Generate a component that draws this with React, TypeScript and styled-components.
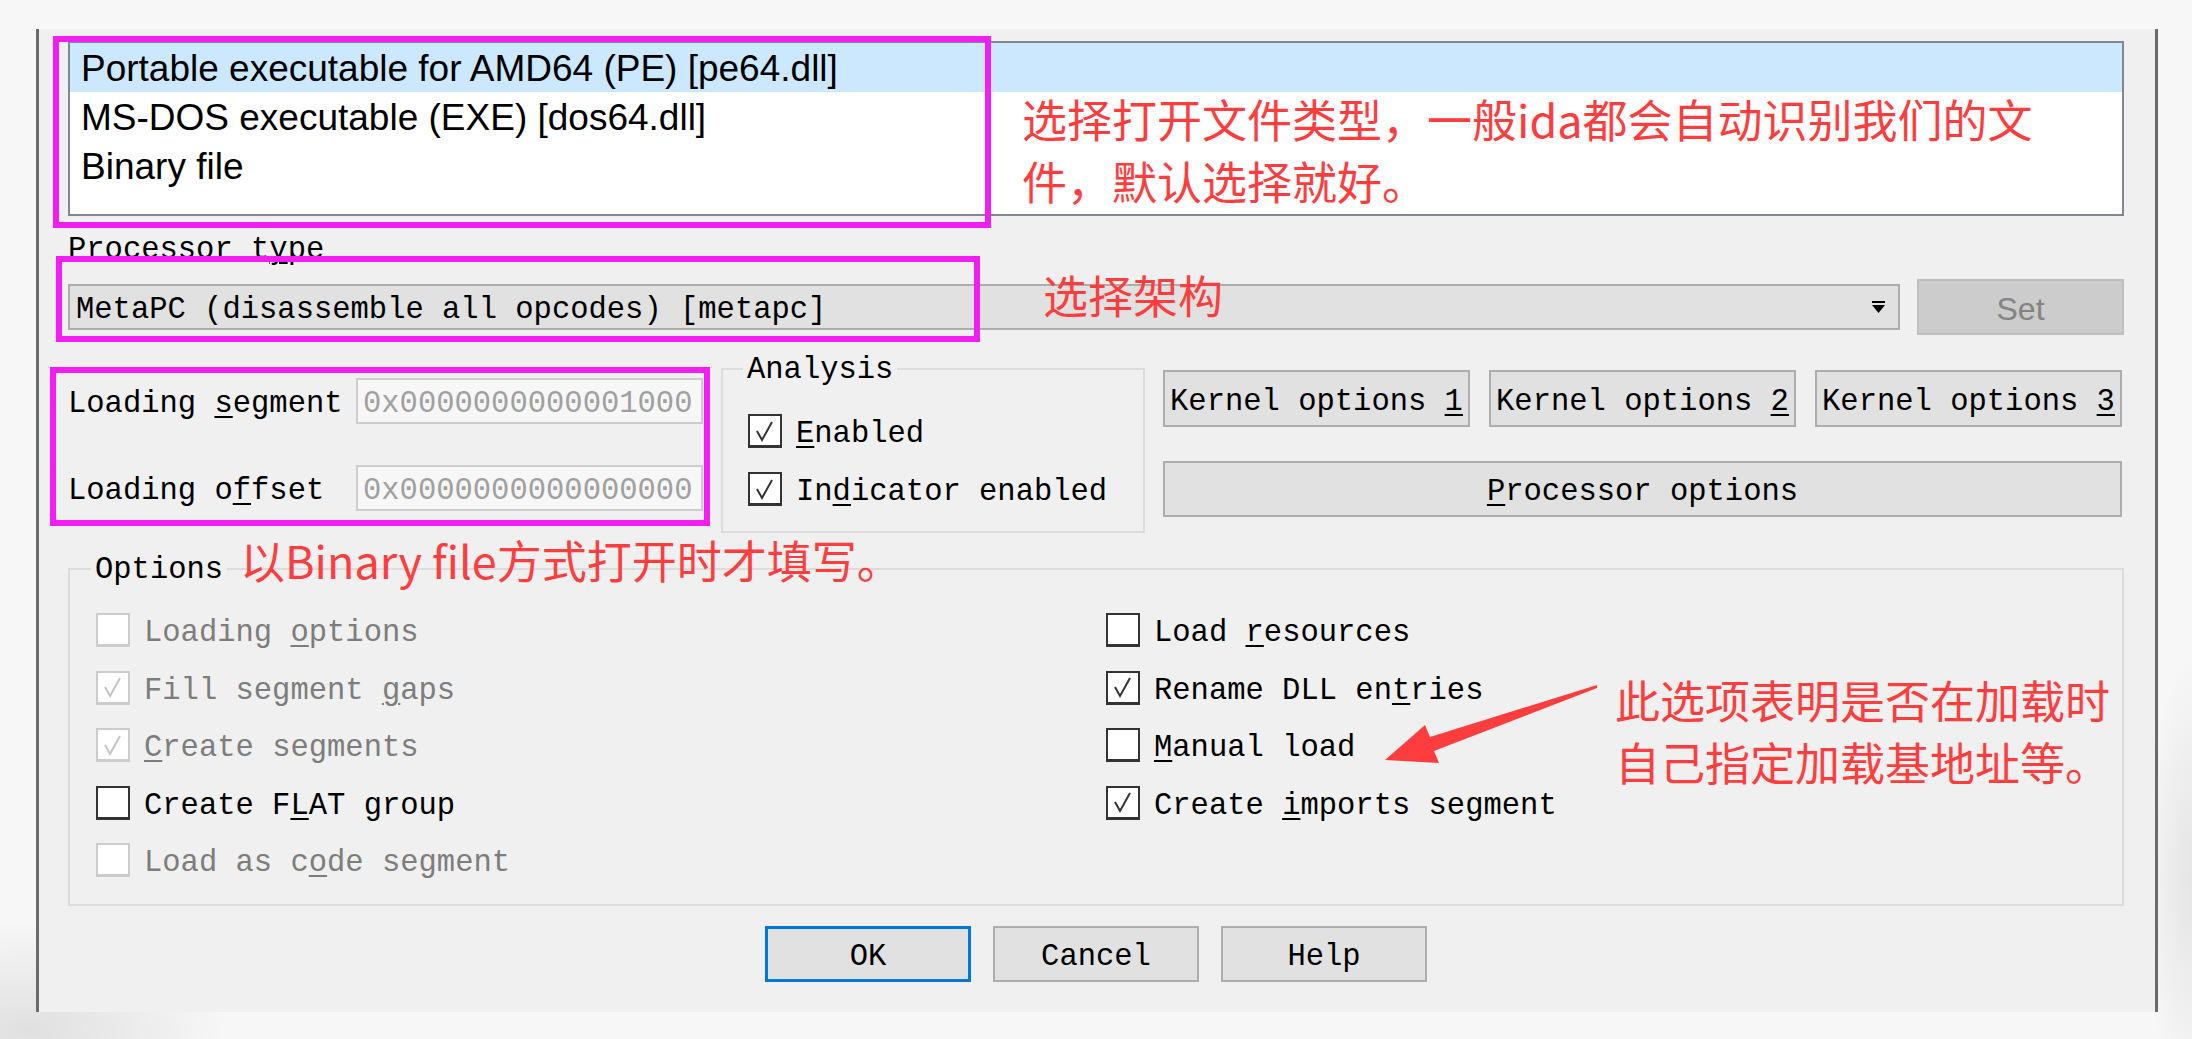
import React from "react";
import styled, { createGlobalStyle } from "styled-components";

const MONO = `"Liberation Mono", "DejaVu Sans Mono", monospace`;
const SANS = `"Liberation Sans", Arial, sans-serif`;
const CJK = `"Noto Sans CJK SC", "Noto Sans", sans-serif`;

const GlobalStyle = createGlobalStyle`
  html, body { margin: 0; padding: 0; }
  body { background: #f7f7f7; overflow: hidden; }
  #root { width: 2192px; height: 1039px; }
`;

const Page = styled.div`
  position: relative;
  width: 2192px;
  height: 1039px;
  box-sizing: border-box;
  padding: 29px 0 0 36px;
  overflow: hidden;
  background:
    radial-gradient(ellipse 200px 110px at 30px 1030px, rgba(205, 205, 205, 0.55), transparent),
    radial-gradient(ellipse 50px 220px at 2192px 880px, rgba(205, 205, 205, 0.45), transparent),
    #f7f7f7;
`;

const Dialog = styled.div`
  width: 2122px;
  height: 983px;
  box-sizing: border-box;
  background: #f0f0f0;
  border-left: 3px solid #6b6b6b;
  border-right: 3px solid #6b6b6b;
  padding: 12px 31px 30px 29px;
  display: flex;
  flex-direction: column;
  font-family: ${MONO};
  font-size: 30.5px;
  color: #000;
  white-space: nowrap;
`;

/* text inside flex-centred controls sits a little lower in the original font */
const Text = styled.span`
  padding-top: 6px;
`;

const ListBox = styled.div`
  height: 175px;
  box-sizing: border-box;
  border: 2px solid #828790;
  background: #fff;
  font-family: ${SANS};
  font-size: 37px;
`;

const ListRow = styled.div<{ $selected?: boolean }>`
  height: 49px;
  display: flex;
  align-items: center;
  padding: 3px 0 0 11px;
  box-sizing: border-box;
  background: ${(p) => (p.$selected ? "#cce8ff" : "transparent")};
`;

const SectionLabel = styled.div`
  margin-top: 16px;
  height: 32px;
  line-height: 36px;
`;

const Key = styled.span`
  text-decoration: underline;
  text-decoration-thickness: 2px;
  text-underline-offset: 4px;
`;

const ComboRow = styled.div`
  margin-top: 15px;
  height: 56px;
  display: flex;
  align-items: center;
  gap: 17px;
`;

const Combo = styled.div`
  flex: 1;
  height: 46px;
  box-sizing: border-box;
  border: 2px solid #adadad;
  background: #e1e1e1;
  display: flex;
  align-items: center;
  justify-content: space-between;
  padding: 0 13px 0 6px;
`;

const SetButton = styled.div`
  width: 207px;
  height: 56px;
  box-sizing: border-box;
  border: 2px solid #bfbfbf;
  background: #cccccc;
  color: #838383;
  font-family: ${SANS};
  font-size: 32px;
  display: flex;
  align-items: center;
  justify-content: center;
  padding-top: 5px;
`;

const MiddleRow = styled.div`
  margin-top: 18px;
  height: 180px;
  display: flex;
  align-items: flex-start;
`;

const SegmentColumn = styled.div`
  width: 635px;
  margin-top: 25px;
  display: flex;
  flex-direction: column;
  gap: 41px;
`;

const FieldRow = styled.div`
  height: 46px;
  display: flex;
  align-items: center;
`;

const FieldLabel = styled.div`
  width: 288px;
  flex-shrink: 0;
  padding-top: 6px;
`;

const TextInput = styled.div`
  width: 347px;
  height: 46px;
  box-sizing: border-box;
  border: 2px solid #cdcdcd;
  background: #f7f7f7;
  color: #a0a0a0;
  padding: 5px 0 0 5px;
  display: flex;
  align-items: center;
  overflow: hidden;
`;

const Group = styled.fieldset<{ $width: number; $ml?: number; $mt?: number }>`
  width: ${(p) => p.$width}px;
  margin: ${(p) => p.$mt ?? 0}px 0 0 ${(p) => p.$ml ?? 0}px;
  box-sizing: border-box;
  border: 2px solid #dcdcdc;
  padding: 0;
  min-width: 0;
`;

const Legend = styled.legend<{ $ml: number }>`
  margin-left: ${(p) => p.$ml}px;
  padding: 0 4px;
  line-height: 34px;
  height: 32px;
`;

const AnalysisBody = styled.div`
  padding: 29px 0 25px 25px;
  display: flex;
  flex-direction: column;
  gap: 24px;
`;

const ButtonColumn = styled.div`
  width: 959px;
  margin: 17px 0 0 18px;
  display: flex;
  flex-direction: column;
  gap: 34px;
`;

const ButtonRow = styled.div`
  display: flex;
  gap: 19px;
`;

const PushButton = styled.button<{ $w?: number; $h?: number; $default?: boolean }>`
  width: ${(p) => (p.$w ? `${p.$w}px` : "100%")};
  height: ${(p) => p.$h ?? 56}px;
  box-sizing: border-box;
  margin: 0;
  padding: 0;
  background: #e1e1e1;
  border: ${(p) => (p.$default ? "3px solid #0078d7" : "2px solid #adadad")};
  font-family: ${MONO};
  font-size: 30.5px;
  color: #000;
  white-space: nowrap;
  display: flex;
  align-items: center;
  justify-content: center;
`;

const OptionsGrid = styled.div`
  padding: 28px 0 27px 26px;
  display: grid;
  grid-template-columns: 1010px 1fr;
  grid-template-rows: repeat(5, 34px);
  grid-auto-flow: column;
  row-gap: 23.5px;
`;

const CheckItem = styled.div<{ $disabled?: boolean }>`
  display: flex;
  align-items: center;
  gap: 14px;
  height: 34px;
  color: ${(p) => (p.$disabled ? "#7d7d7d" : "#000")};
`;

const Box = styled.div<{ $disabled?: boolean }>`
  width: 34px;
  height: 34px;
  flex-shrink: 0;
  box-sizing: border-box;
  background: #fff;
  border: 2px solid ${(p) => (p.$disabled ? "#cccccc" : "#333333")};
  border-bottom-width: 3px;
  display: flex;
  align-items: center;
  justify-content: center;
`;

const Footer = styled.div`
  margin-top: 20px;
  display: flex;
  justify-content: center;
  gap: 22px;
`;

const Highlight = styled.div<{ $x: number; $y: number; $w: number; $h: number }>`
  position: absolute;
  left: ${(p) => p.$x}px;
  top: ${(p) => p.$y}px;
  width: ${(p) => p.$w}px;
  height: ${(p) => p.$h}px;
  box-sizing: border-box;
  border: 6px solid #f01ef0;
  pointer-events: none;
`;

const Note = styled.div<{ $x: number; $y: number }>`
  position: absolute;
  left: ${(p) => p.$x}px;
  top: ${(p) => p.$y}px;
  font-family: ${CJK};
  font-size: 45px;
  line-height: 62px;
  color: #fe3e3e;
  white-space: nowrap;
`;

const ArrowSvg = styled.svg`
  position: absolute;
  left: 1370px;
  top: 670px;
  width: 240px;
  height: 110px;
`;

const DropArrow = () => (
  <svg width="13" height="13" viewBox="0 0 13 13">
    <rect x="0" y="0" width="13" height="2" fill="#000" />
    <polygon points="0,4 13,4 6.5,12" fill="#000" />
  </svg>
);

const Check = ({ color }: { color: string }) => (
  <svg width="28" height="28" viewBox="0 0 28 28">
    <polyline points="6,14 11,23 21,5" fill="none" stroke={color} strokeWidth="2" />
  </svg>
);

type CheckProps = {
  checked?: boolean;
  disabled?: boolean;
  children: React.ReactNode;
};

const CheckOption = ({ checked, disabled, children }: CheckProps) => (
  <CheckItem $disabled={disabled}>
    <Box $disabled={disabled}>{checked && <Check color={disabled ? "#c4c4c4" : "#333"} />}</Box>
    <Text>{children}</Text>
  </CheckItem>
);

export default function App() {
  return (
    <Page>
      <GlobalStyle />
      <Dialog>
        <ListBox>
          <ListRow $selected>Portable executable for AMD64 (PE) [pe64.dll]</ListRow>
          <ListRow>MS-DOS executable (EXE) [dos64.dll]</ListRow>
          <ListRow>Binary file</ListRow>
        </ListBox>

        <SectionLabel>
          Processor t<Key>y</Key>pe
        </SectionLabel>

        <ComboRow>
          <Combo>
            <Text>MetaPC (disassemble all opcodes) [metapc]</Text>
            <DropArrow />
          </Combo>
          <SetButton>Set</SetButton>
        </ComboRow>

        <MiddleRow>
          <SegmentColumn>
            <FieldRow>
              <FieldLabel>
                Loading <Key>s</Key>egment
              </FieldLabel>
              <TextInput>0x0000000000001000</TextInput>
            </FieldRow>
            <FieldRow>
              <FieldLabel>
                Loading o<Key>f</Key>fset
              </FieldLabel>
              <TextInput>0x0000000000000000</TextInput>
            </FieldRow>
          </SegmentColumn>

          <Group $width={424} $ml={18}>
            <Legend $ml={20}>Analysis</Legend>
            <AnalysisBody>
              <CheckOption checked>
                <Key>E</Key>nabled
              </CheckOption>
              <CheckOption checked>
                In<Key>d</Key>icator enabled
              </CheckOption>
            </AnalysisBody>
          </Group>

          <ButtonColumn>
            <ButtonRow>
              <PushButton $w={307} $h={57}>
                <Text>
                  Kernel options <Key>1</Key>
                </Text>
              </PushButton>
              <PushButton $w={307} $h={57}>
                <Text>
                  Kernel options <Key>2</Key>
                </Text>
              </PushButton>
              <PushButton $w={307} $h={57}>
                <Text>
                  Kernel options <Key>3</Key>
                </Text>
              </PushButton>
            </ButtonRow>
            <PushButton>
              <Text>
                <Key>P</Key>rocessor options
              </Text>
            </PushButton>
          </ButtonColumn>
        </MiddleRow>

        <Group $width={2056} $mt={20}>
          <Legend $ml={21}>Options</Legend>
          <OptionsGrid>
            <CheckOption disabled>
              Loading <Key>o</Key>ptions
            </CheckOption>
            <CheckOption disabled checked>
              Fill segment <Key>g</Key>aps
            </CheckOption>
            <CheckOption disabled checked>
              <Key>C</Key>reate segments
            </CheckOption>
            <CheckOption>
              Create F<Key>L</Key>AT group
            </CheckOption>
            <CheckOption disabled>
              Load as c<Key>o</Key>de segment
            </CheckOption>
            <CheckOption>
              Load <Key>r</Key>esources
            </CheckOption>
            <CheckOption checked>
              Rename DLL en<Key>t</Key>ries
            </CheckOption>
            <CheckOption>
              <Key>M</Key>anual load
            </CheckOption>
            <CheckOption checked>
              Create <Key>i</Key>mports segment
            </CheckOption>
          </OptionsGrid>
        </Group>

        <Footer>
          <PushButton $w={206} $default>
            <Text>OK</Text>
          </PushButton>
          <PushButton $w={206}>
            <Text>Cancel</Text>
          </PushButton>
          <PushButton $w={206}>
            <Text>Help</Text>
          </PushButton>
        </Footer>
      </Dialog>

      <Highlight $x={53} $y={36} $w={938} $h={192} />
      <Highlight $x={56} $y={256} $w={924} $h={86} />
      <Highlight $x={50} $y={367} $w={660} $h={159} />

      <Note $x={1022} $y={88}>
        选择打开文件类型，一般ida都会自动识别我们的文
        <br />
        件，默认选择就好。
      </Note>
      <Note $x={1043} $y={264}>选择架构</Note>
      <Note $x={240} $y={529}>以Binary file方式打开时才填写。</Note>
      <Note $x={1615} $y={669}>
        此选项表明是否在加载时
        <br />
        自己指定加载基地址等。
      </Note>

      <ArrowSvg viewBox="0 0 240 110">
        <polygon
          points="227,15 60,67 55,55 15,90 69,93 64,81 227,18"
          fill="#fe3e3e"
        />
      </ArrowSvg>
    </Page>
  );
}
